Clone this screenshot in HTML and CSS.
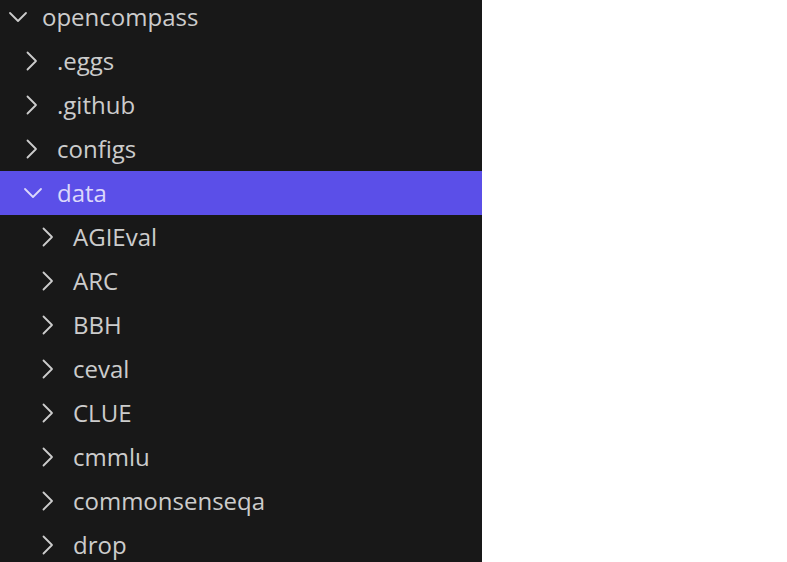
FILE: index.html
```html
<!DOCTYPE html>
<html>
<head>
<meta charset="utf-8">
<link rel="stylesheet" href="styles.css">
</head>
<body>
<div class="page">
  <div class="sidebar">
    <ul class="tree">
      <li class="row lvl0"><svg class="chev" viewBox="0 0 20 20"><path d="M2 6 L10 14 L18 6"/></svg><span class="label">opencompass</span></li>
      <li class="row lvl1"><svg class="chev" viewBox="0 0 20 20"><path d="M4.5 1.5 L13 10 L4.5 18.5"/></svg><span class="label">.eggs</span></li>
      <li class="row lvl1"><svg class="chev" viewBox="0 0 20 20"><path d="M4.5 1.5 L13 10 L4.5 18.5"/></svg><span class="label">.github</span></li>
      <li class="row lvl1"><svg class="chev" viewBox="0 0 20 20"><path d="M4.5 1.5 L13 10 L4.5 18.5"/></svg><span class="label">configs</span></li>
      <li class="row lvl1 selected"><svg class="chev" viewBox="0 0 20 20"><path d="M2 6 L10 14 L18 6"/></svg><span class="label">data</span></li>
      <li class="row lvl2"><svg class="chev" viewBox="0 0 20 20"><path d="M4.5 1.5 L13 10 L4.5 18.5"/></svg><span class="label">AGIEval</span></li>
      <li class="row lvl2"><svg class="chev" viewBox="0 0 20 20"><path d="M4.5 1.5 L13 10 L4.5 18.5"/></svg><span class="label">ARC</span></li>
      <li class="row lvl2"><svg class="chev" viewBox="0 0 20 20"><path d="M4.5 1.5 L13 10 L4.5 18.5"/></svg><span class="label">BBH</span></li>
      <li class="row lvl2"><svg class="chev" viewBox="0 0 20 20"><path d="M4.5 1.5 L13 10 L4.5 18.5"/></svg><span class="label">ceval</span></li>
      <li class="row lvl2"><svg class="chev" viewBox="0 0 20 20"><path d="M4.5 1.5 L13 10 L4.5 18.5"/></svg><span class="label">CLUE</span></li>
      <li class="row lvl2"><svg class="chev" viewBox="0 0 20 20"><path d="M4.5 1.5 L13 10 L4.5 18.5"/></svg><span class="label">cmmlu</span></li>
      <li class="row lvl2"><svg class="chev" viewBox="0 0 20 20"><path d="M4.5 1.5 L13 10 L4.5 18.5"/></svg><span class="label">commonsenseqa</span></li>
      <li class="row lvl2"><svg class="chev" viewBox="0 0 20 20"><path d="M4.5 1.5 L13 10 L4.5 18.5"/></svg><span class="label">drop</span></li>
    </ul>
  </div>
  <div class="main"></div>
</div>
</body>
</html>
```
FILE: styles.css
```css
html, body {
  margin: 0;
  padding: 0;
  height: 100%;
  background: #ffffff;
  overflow: hidden;
}
.page {
  display: flex;
  height: 100%;
}
.sidebar {
  width: 482px;
  flex: none;
  background: #181818;
  overflow: hidden;
}
.main {
  flex: 1;
  background: #ffffff;
}
.tree {
  list-style: none;
  margin: -5px 0 0 0;
  padding: 0;
}
.row {
  height: 44px;
  display: flex;
  align-items: center;
  color: #cccccc;
  font-family: "Open Sans", "Noto Sans", sans-serif;
  font-size: 24px;
  white-space: nowrap;
}
.chev {
  width: 20px;
  height: 20px;
  flex: none;
  fill: none;
  stroke: #cccccc;
  stroke-width: 1.8;
  stroke-linecap: round;
  stroke-linejoin: round;
  margin-right: 14px;
}
.lvl0 { padding-left: 8px; }
.lvl1 { padding-left: 23px; }
.lvl2 { padding-left: 39px; }
.label {
  line-height: 44px;
}
.selected {
  background: #5b4fe8;
  color: #dcd8fb;
}
.selected .chev {
  stroke: #dcd8fb;
}
```
